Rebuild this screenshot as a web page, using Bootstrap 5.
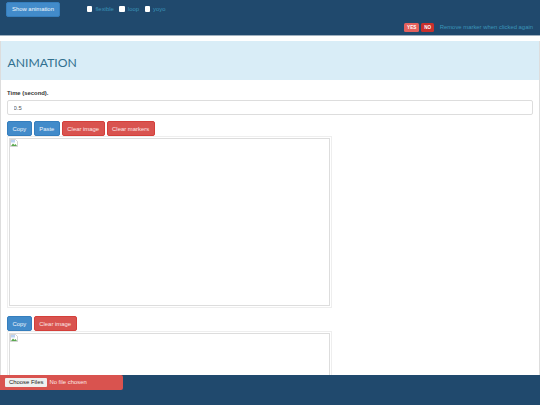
<!DOCTYPE html>
<html lang="en">
<head>
<meta charset="utf-8">
<title>Animation</title>
<link href="https://cdn.jsdelivr.net/npm/bootstrap@5.3.0/dist/css/bootstrap.min.css" rel="stylesheet">
<style>
html,body{height:100%;}
body{font-family:"Liberation Sans",Arial,sans-serif;font-size:5.9px;color:#333;overflow:hidden;background:#fff;}
.shell{height:405px;}
.topbar{background:#20496d;height:36px;padding:2px 7px 0 6px;border-bottom:1px solid #9fb0bf;flex:none;}
.tool-btn{font-size:5.9px;line-height:9px;padding:2.5px 4.5px;border-radius:2px;color:#f1f5fa;border:1px solid #357ebd;background:#428bca;}
.tool-red{background:#d9534f;border-color:#d43f3a;color:#fbe6e5;}
.show-btn{height:15px;padding:2px 5px;}
.opts{margin-left:27px;gap:5.6px;color:#3a94b8;font-size:5.9px;line-height:14px;}
.opt{gap:3px;}
.opt input{appearance:none;width:5.5px;height:5.5px;background:#fff;border-radius:1px;margin:0;}
.marker-row{gap:2px;margin-top:6px;color:#3a94b8;font-size:5.9px;line-height:9px;}
.tag{font-size:4.6px;font-weight:700;line-height:9px;height:9px;padding:0 3px;border-radius:1.5px;color:#fff;background:#e4605c;}
.tag-on{background:#c9302c;}
.marker-text{margin-left:3.5px;}
.body-area{flex:1 1 auto;min-height:0;overflow:hidden;padding-top:5px;}
.panel-box{border-left:1px solid #ddd;border-right:1px solid #ddd;height:100%;overflow:hidden;}
.head-box{background:#d9edf7;color:#31708f;height:39px;padding-left:6.5px;font-family:Lato,"Liberation Sans",sans-serif;font-weight:400;font-size:12.2px;line-height:44px;}
.content-box{padding:9px 6px 0 6px;}
.lbl{font-weight:700;font-size:5.9px;line-height:9px;margin:0 0 2px;}
.val-input{display:block;width:100%;height:15px;font-size:5.9px;line-height:9px;padding:2px 5.5px;color:#555;border:1px solid #ddd;border-radius:2px;background:#fff;margin-bottom:6px;}
.btn-row{gap:2px;height:15px;}
.pic-frame{width:325px;height:172px;padding:1px;border:1px solid #eee;background:#fff;margin-bottom:8px;}
.pic-inner{height:100%;border:1px solid #ddd;padding:0;}
.pic-inner svg{display:block;width:8px;height:8px;}
.bottombar{background:#20496d;height:30px;flex:none;}
.file-box{width:123px;height:15px;background:#d9534f;border-radius:0 2px 2px 0;padding-left:5px;color:#fbe6e5;font-size:5.9px;gap:2px;}
.file-btn{background:#efefef;color:#222;padding:0 4px;line-height:9px;border-radius:1px;height:9px;}
</style>
</head>
<body>
<div class="shell d-flex flex-column">
  <div class="topbar">
    <div class="d-flex align-items-start">
      <button type="button" class="tool-btn show-btn">Show animation</button>
      <div class="opts d-flex">
        <label class="opt d-flex align-items-center"><input type="checkbox">flexible</label>
        <label class="opt d-flex align-items-center"><input type="checkbox">loop</label>
        <label class="opt d-flex align-items-center"><input type="checkbox">yoyo</label>
      </div>
    </div>
    <div class="marker-row d-flex justify-content-end align-items-center">
      <span class="tag">YES</span><span class="tag tag-on">NO</span><span class="marker-text">Remove marker when clicked again</span>
    </div>
  </div>
  <div class="body-area">
    <div class="panel-box">
      <div class="head-box">ANIMATION</div>
      <div class="content-box">
        <p class="lbl">Time (second).</p>
        <input class="val-input" type="text" value="0.5">
        <div class="btn-row d-flex">
          <button type="button" class="tool-btn">Copy</button>
          <button type="button" class="tool-btn">Paste</button>
          <button type="button" class="tool-btn tool-red">Clear image</button>
          <button type="button" class="tool-btn tool-red">Clear markers</button>
        </div>
        <div class="pic-frame"><div class="pic-inner">
          <svg viewBox="0 0 16 16"><path d="M1 1h10l4 4v10H1z" fill="#fff" stroke="#a9a9a9"/><path d="M2 14l4-5 3 3 2-2 3 4z" fill="#5aa84f"/><path d="M2 2h8v5H2z" fill="#bcd3f2"/></svg>
        </div></div>
        <div class="btn-row d-flex">
          <button type="button" class="tool-btn">Copy</button>
          <button type="button" class="tool-btn tool-red">Clear image</button>
        </div>
        <div class="pic-frame"><div class="pic-inner">
          <svg viewBox="0 0 16 16"><path d="M1 1h10l4 4v10H1z" fill="#fff" stroke="#a9a9a9"/><path d="M2 14l4-5 3 3 2-2 3 4z" fill="#5aa84f"/><path d="M2 2h8v5H2z" fill="#bcd3f2"/></svg>
        </div></div>
      </div>
    </div>
  </div>
  <div class="bottombar">
    <div class="file-box d-flex align-items-center"><span class="file-btn">Choose Files</span><span>No file chosen</span></div>
  </div>
</div>
<script src="https://cdn.jsdelivr.net/npm/bootstrap@5.3.0/dist/js/bootstrap.bundle.min.js"></script>
</body>
</html>
